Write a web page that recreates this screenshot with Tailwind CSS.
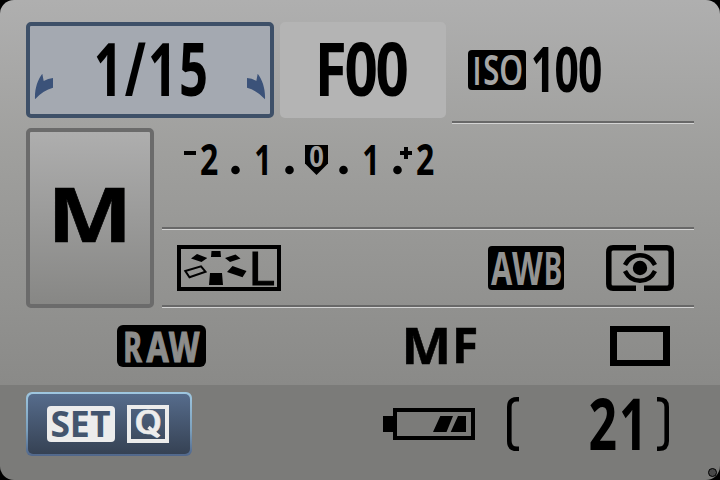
<!DOCTYPE html>
<html lang="en">
<head>
<meta charset="utf-8">
<title>Camera shooting settings</title>
<script src="https://cdn.jsdelivr.net/npm/@tailwindcss/browser@4"></script>
</head>
<body class="bg-black w-[720px] h-[480px] overflow-hidden font-['Noto_Sans',sans-serif]">
<main class="relative flex h-[480px] w-[720px] flex-col overflow-hidden rounded-[14px]">
  <section class="flex h-[385px] flex-col bg-linear-to-b from-[#afafaf] via-[#9f9f9d] via-40% to-[#8a8a88] pt-[22px] pl-[26px] pr-[26px]">
    <div class="flex h-[102px] gap-1.5">
      <div class="h-24 w-[248px] rounded-[5px] border-4 border-[#3e5068] bg-[#a4a9b1]">
        <svg class="block h-[88px] w-[240px] overflow-visible" viewBox="30 26 240 88">
          <text data-box="96.3 43 206 97" data-track="4" font-weight="700">1/15</text>
          <path fill="#3b5279" d="M35 99.300C34.500 89 37.500 80 42.300 73.700L43.700 81Q48 78.300 53 78V87.800Q43 90.500 35 99.300ZM265 99.300C265.500 89 262.500 80 257.700 73.700L256.300 81Q252 78.300 247 78V87.800Q257 90.500 265 99.300Z"/>
        </svg>
      </div>
      <div class="h-24 w-[166px] rounded-[5px] bg-[#b4b4b4]">
        <svg class="block h-24 w-[166px] overflow-visible" viewBox="280 22 166 96">
          <text data-box="320 43 407 97" data-track="-4" font-weight="700">F00</text>
        </svg>
      </div>
      <div class="flex w-[242px] flex-col">
        <svg class="block h-[99px] w-[242px] overflow-visible" viewBox="452 22 242 99">
          <rect x="468" y="50" width="58" height="40" rx="4"/>
          <g fill="#a6a6a5">
            <text data-box="475 56 479 85" data-font="Liberation Sans" font-family="Liberation Sans" font-weight="700">I</text>
            <text data-box="484.3 55 498 85.500" font-weight="600">S</text>
            <text data-box="500.700 55 521.300 85.500" font-weight="600">O</text>
          </g>
          <text data-box="533 47 601 93" data-track="-2" font-weight="700">100</text>
        </svg>
        <div class="h-[3px] border-b border-[#d4d4d4] bg-[#686868]"></div>
      </div>
    </div>

    <div class="mt-1 flex h-[180px] gap-2">
      <div class="w-32 rounded-[5px] border-4 border-[#6b6b6b] bg-linear-to-b from-[#aeaeae] to-[#878785]">
        <svg class="block h-[172px] w-[120px] overflow-visible" viewBox="30 132 120 172">
          <text data-box="55.300 187.300 124.700 241.700" font-weight="700" stroke="#000" stroke-width="0.700">M</text>
        </svg>
      </div>
      <div class="flex w-[532px] flex-col">
        <svg class="block h-[99px] w-[532px] overflow-visible" viewBox="162 128 532 99">
          <path d="M184 151h12v4h-12zM404 147h4v4h4v4h-4v4h-4v-4h-4v-4h4z"/>
          <text data-box="201 144 217.300 175" font-weight="700">2</text>
          <circle cx="235.500" cy="170" r="4.300"/>
          <text data-box="255.700 145 267 175" font-weight="700">1</text>
          <circle cx="289.500" cy="170" r="4.300"/>
          <path d="M305 145h23v18.500L316.500 175L305 163.500Z"/>
          <text data-box="310 147 323 167.500" font-weight="700" fill="#a0a09f">0</text>
          <circle cx="343.500" cy="170" r="4.300"/>
          <text data-box="363.700 145 375 175" font-weight="700">1</text>
          <circle cx="397.500" cy="170" r="4.300"/>
          <text data-box="417 144 433.300 175" font-weight="700">2</text>
        </svg>
        <div class="h-[3px] border-b border-[#d4d4d4] bg-[#686868]"></div>
        <svg class="block h-[75px] w-[532px] overflow-visible" viewBox="162 230 532 75">
          <rect x="179" y="247" width="100" height="42" fill="none" stroke="#000" stroke-width="4"/>
          <path d="M191 258.500L197 254L207.300 258L201.500 262ZM211.500 251h9l.5 6h-10ZM225 258L235.500 254.500L240.500 258.500L230 262ZM232.500 266L246.500 271L242.500 277.300L227 272ZM210 273h12l1 12h-14Z"/>
          <path fill="none" stroke="#000" stroke-width="2" d="M185.300 271L201 266.300L205.500 271.700L189.500 277.300Z"/>
          <text data-box="252.500 251.500 273.500 284.500" font-weight="400" stroke="#000" stroke-width="1">L</text>
          <rect x="488" y="246" width="76" height="44" rx="4"/>
          <g fill="#939391">
            <text data-box="491 251 512.500 285" font-weight="700">A</text>
            <text data-box="512 251 543 285" font-weight="700">W</text>
            <text data-box="546 251 561 285" font-weight="700">B</text>
          </g>
          <g fill="none" stroke="#000">
            <path stroke-width="5.500" d="M636 247.700H613Q608.800 247.700 608.800 252V284Q608.800 288.300 613 288.300H636M644 247.700H667Q671.200 247.700 671.200 252V284Q671.200 288.300 667 288.300H644"/>
            <path stroke-width="4.500" d="M625 265Q630 255.200 640 255.200T655 265M625 271Q630 280.800 640 280.800T655 271"/>
          </g>
          <circle cx="640" cy="268" r="7.200"/>
        </svg>
        <div class="h-[3px] border-b border-[#d4d4d4] bg-[#686868]"></div>
      </div>
    </div>

    <svg class="block h-[77px] w-[668px] overflow-visible" viewBox="26 308 668 77">
      <rect x="117" y="325" width="89" height="42" rx="6"/>
      <g fill="#8d8d8b" stroke="#8d8d8b" stroke-width="1">
        <text data-box="125.5 331.5 142 361.500" font-weight="700">R</text>
        <text data-box="146.5 331.5 169 361.500" font-weight="700">A</text>
        <text data-box="169 331.5 199.500 361.500" font-weight="700">W</text>
      </g>
      <g stroke="#000" stroke-width="0.500">
        <text data-box="406.200 328.200 446.800 363.800" font-weight="700">M</text>
        <text data-box="456.200 328.200 475.800 363.800" font-weight="700">F</text>
      </g>
      <path fill-rule="evenodd" d="M610 326h60v40h-60zM617 332v28h46v-28z"/>
    </svg>
  </section>

  <footer class="flex h-[95px] justify-between bg-[#7b7b79] pt-[7px] pr-[26px] pl-[26px]">
    <div class="h-16 w-[166px] rounded-[6px] bg-linear-to-b from-[#9fc7e0] via-[#7ba0bd] via-60% to-[#50668a] p-0.5">
      <div class="h-[60px] w-[162px] rounded-[5px] bg-linear-to-b from-[#566c8c] to-[#364254]">
        <svg class="block h-[60px] w-[162px] overflow-visible" viewBox="28 394 162 60">
          <rect x="47" y="406" width="68" height="36" rx="4" fill="#ececec"/>
          <g fill="#43556e">
            <text data-box="52 411 69 437.300" font-weight="700">S</text>
            <text data-box="73 411 88 437" font-weight="700">E</text>
            <text data-box="90.700 411 110 437" font-weight="700">T</text>
          </g>
          <rect x="129" y="407" width="38" height="34" fill="none" stroke="#ececec" stroke-width="4"/>
          <text data-box="136 409.700 160 438.700" data-font="Roboto" font-family="Roboto" font-weight="500" fill="#ececec" stroke="#ececec" stroke-width="0.500">Q</text>
          <path stroke="#ececec" stroke-width="3.500" d="M148.500 427L159 436.500"/>
        </svg>
      </div>
    </div>
    <svg class="block h-[88px] w-[311px] overflow-visible" viewBox="383 392 311 88">
      <path fill-rule="evenodd" d="M383 416h10v-8h82v32h-82v-8h-10zM397 412v24h74v-24z"/>
      <path d="M440.300 416h12.700l-6.500 16H433ZM458 416h8v16h-15.300Z"/>
      <path fill="none" stroke="#000" stroke-width="4.600" d="M519 399.200H517Q509.300 399.200 509.300 407V441Q509.300 448.800 517 448.800H519M657 399.200H659Q666.700 399.200 666.700 407V441Q666.700 448.800 659 448.800H657"/>
      <text data-box="590 397 640 450" data-track="4" font-weight="700">21</text>
    </svg>
  </footer>
</main>
<div class="absolute top-[468px] left-[708px] size-[9px] rounded-full border border-black bg-[#484848]"></div>
<script>
  // Scale each label so that its ink fills data-box (left top right bottom).
  // data-track is letter spacing in hundredths of an em.
  const ctx = document.createElement('canvas').getContext('2d');
  for (const t of document.querySelectorAll('text[data-box]')) {
    const [l, top, r, b] = t.dataset.box.split(' ').map(Number);
    const track = Number(t.dataset.track || 0);
    ctx.font = `${t.getAttribute('font-weight')} 100px "${t.dataset.font || 'Noto Sans'}"`;
    const m = ctx.measureText(t.textContent);
    const ink = m.actualBoundingBoxRight + m.actualBoundingBoxLeft + track * (t.textContent.length - 1);
    const sx = (r - l) / ink;
    const sy = (b - top) / (m.actualBoundingBoxAscent + m.actualBoundingBoxDescent);
    t.setAttribute('font-size', 100);
    t.setAttribute('letter-spacing', track);
    // A stroke drawn on a label takes the label's scale, so divide it out.
    const sw = t.getAttribute('stroke-width') || t.parentNode.getAttribute('stroke-width');
    if (sw) t.setAttribute('stroke-width', sw / ((sx + sy) / 2));
    t.setAttribute('transform', `translate(${l + m.actualBoundingBoxLeft * sx} ${b - m.actualBoundingBoxDescent * sy}) scale(${sx} ${sy})`);
  }
</script>
</body>
</html>
